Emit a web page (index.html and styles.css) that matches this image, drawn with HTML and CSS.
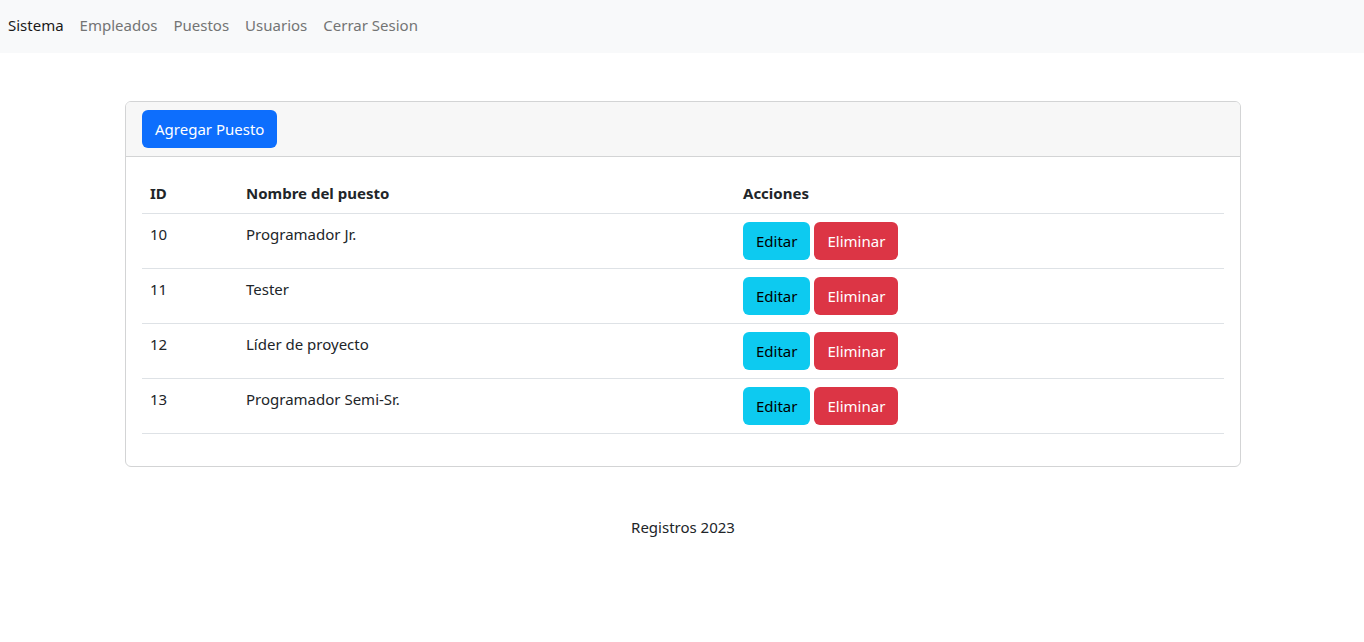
FILE: index.html
```html
<!DOCTYPE html>
<html lang="es">
<head>
<meta charset="utf-8">
<title>Puestos</title>
<link rel="stylesheet" href="styles.css">
</head>
<body>
<nav class="navbar">
  <a class="nav-link active" href="#">Sistema</a>
  <a class="nav-link" href="#">Empleados</a>
  <a class="nav-link" href="#">Puestos</a>
  <a class="nav-link" href="#">Usuarios</a>
  <a class="nav-link" href="#">Cerrar Sesion</a>
</nav>
<main class="container">
  <div class="card">
    <div class="card-header">
      <a class="btn btn-primary" href="#">Agregar Puesto</a>
    </div>
    <div class="card-body">
      <table class="table">
        <thead>
          <tr>
            <th class="col-id">ID</th>
            <th class="col-name">Nombre del puesto</th>
            <th class="col-actions">Acciones</th>
          </tr>
        </thead>
        <tbody>
          <tr>
            <td>10</td>
            <td>Programador Jr.</td>
            <td><div class="actions"><a class="btn btn-info" href="#">Editar</a><a class="btn btn-danger" href="#">Eliminar</a></div></td>
          </tr>
          <tr>
            <td>11</td>
            <td>Tester</td>
            <td><div class="actions"><a class="btn btn-info" href="#">Editar</a><a class="btn btn-danger" href="#">Eliminar</a></div></td>
          </tr>
          <tr>
            <td>12</td>
            <td>Líder de proyecto</td>
            <td><div class="actions"><a class="btn btn-info" href="#">Editar</a><a class="btn btn-danger" href="#">Eliminar</a></div></td>
          </tr>
          <tr>
            <td>13</td>
            <td>Programador Semi-Sr.</td>
            <td><div class="actions"><a class="btn btn-info" href="#">Editar</a><a class="btn btn-danger" href="#">Eliminar</a></div></td>
          </tr>
        </tbody>
      </table>
    </div>
  </div>
</main>
<footer class="footer">Registros 2023</footer>
</body>
</html>
```
FILE: styles.css
```css
* { box-sizing: border-box; }
html, body { margin: 0; padding: 0; }
body {
  font-family: "Noto Sans", "Open Sans", sans-serif;
  font-size: 15px;
  line-height: 24px;
  color: #212529;
  background: #fff;
}
.navbar {
  display: flex;
  align-items: center;
  height: 53px;
  padding-bottom: 3px;
  background: #f8f9fa;
}
.nav-link {
  padding: 0 8px;
  color: #737474;
  text-decoration: none;
}
.nav-link.active { color: #1a1a1a; }
.container {
  width: 1140px;
  margin: 48px auto 0;
  padding: 0 11px 0 13px;
}
.card {
  border: 1px solid #d3d4d5;
  border-radius: 6px;
  overflow: hidden;
}
.card-header {
  background: #f7f7f7;
  padding: 8px 16px;
  border-bottom: 1px solid #d3d4d5;
}
.card-body { padding: 16px; }
.btn {
  display: inline-block;
  padding: 6px 12px;
  font-size: 15px;
  line-height: 24px;
  border-radius: 6px;
  text-decoration: none;
  border: 1px solid transparent;
}
.btn-primary { background: #0d6efd; color: #fff; }
.btn-info { background: #0dcaf0; color: #000; }
.btn-danger { background: #dc3545; color: #fff; }
.actions { display: flex; gap: 4px; }
.table {
  width: 100%;
  border-collapse: collapse;
  margin-bottom: 16px;
}
.table th, .table td {
  text-align: left;
  vertical-align: top;
  padding: 8px;
  border-bottom: 1px solid #dee2e6;
}
.table th { font-weight: 700; }
.col-id { width: 96px; }
.col-name { width: 497px; }
.footer {
  text-align: center;
  margin-top: 48px;
  padding-left: 2px;
}
```
